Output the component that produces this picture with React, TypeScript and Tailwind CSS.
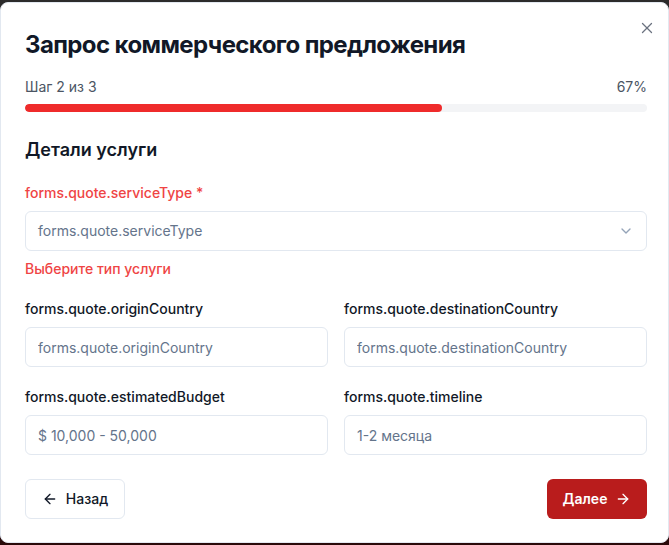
import { ArrowLeft, ArrowRight, ChevronDown, X } from "lucide-react"

const Field = ({ label, placeholder }: { label: string; placeholder: string }) => (
    <div className="flex flex-col">
        <label className="text-sm font-medium text-[#111827] leading-5">{label}</label>
        <input
            placeholder={placeholder}
            className="mt-2 h-10 w-full rounded-md border border-[#e2e8f0] px-3 text-sm text-[#111827] placeholder:text-[#64748b] outline-none"
        />
    </div>
)

const App = () => {
    return (
        <div className="h-[545px] w-[669px] overflow-hidden bg-gradient-to-b from-[#2b2b2b] to-[#2a0a0a] pt-[2px] font-['Inter',sans-serif]">
            <div className="relative h-[541px] rounded-lg border border-[#e2e8f0] bg-white pl-6 pr-[21px] pt-[26px]">
                <button className="absolute right-3 top-4 text-[#6b7280]">
                    <X size={18} strokeWidth={1.75} />
                </button>
                <h2 className="text-2xl font-bold leading-8 tracking-tight text-[#111827]">Запрос коммерческого предложения</h2>

                <div className="mt-4 flex justify-between text-sm leading-5 text-[#4b5563]">
                    <span>Шаг 2 из 3</span>
                    <span>67%</span>
                </div>
                <div className="mt-[7px] h-2 w-full overflow-hidden rounded-full bg-[#f3f4f6]">
                    <div className="h-full rounded-full bg-[#ef2b2b]" style={{ width: "67%" }} />
                </div>

                <h3 className="mt-6 text-lg font-semibold leading-7 text-[#111827]">Детали услуги</h3>

                <div className="mt-[19px] flex flex-col">
                    <label className="text-sm font-medium leading-5 text-[#ef4444]">forms.quote.serviceType *</label>
                    <button className="mt-2 flex h-10 w-full items-center justify-between rounded-md border border-[#e2e8f0] px-3 text-sm text-[#64748b]">
                        <span>forms.quote.serviceType</span>
                        <ChevronDown size={16} className="text-[#94a3b8]" />
                    </button>
                    <p className="mt-2 text-sm font-medium leading-5 text-[#ef4444]">Выберите тип услуги</p>
                </div>

                <div className="mt-5 grid grid-cols-2 gap-x-4 gap-y-5">
                    <Field label="forms.quote.originCountry" placeholder="forms.quote.originCountry" />
                    <Field label="forms.quote.destinationCountry" placeholder="forms.quote.destinationCountry" />
                    <Field label="forms.quote.estimatedBudget" placeholder="$ 10,000 - 50,000" />
                    <Field label="forms.quote.timeline" placeholder="1-2 месяца" />
                </div>

                <div className="mt-6 flex justify-between">
                    <button className="flex h-10 w-[100px] items-center justify-center gap-2 rounded-md border border-[#e2e8f0] text-sm font-medium text-[#111827]">
                        <ArrowLeft size={16} />
                        Назад
                    </button>
                    <button className="flex h-10 w-[100px] items-center justify-center gap-2 rounded-md bg-[#b91c1c] text-sm font-semibold text-white">
                        Далее
                        <ArrowRight size={16} />
                    </button>
                </div>
            </div>
        </div>
    )
}

export default App
